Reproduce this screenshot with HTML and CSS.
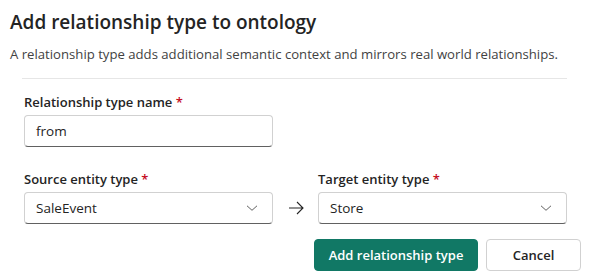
FILE: index.html
```html
<!DOCTYPE html>
<html lang="en">
<head>
    <meta charset="UTF-8">
    <meta name="viewport" content="width=device-width, initial-scale=1.0">
    <title>Add relationship type</title>
    <link rel="stylesheet" href="styles.css">
</head>
<body>
    <div class="dialog">
        <h1 class="title">Add relationship type to ontology</h1>
        <p class="subtitle">A relationship type adds additional semantic context and mirrors real world relationships.</p>
        <div class="divider"></div>

        <div class="form">
            <!-- Name -->
            <div class="field">
                <label class="label">Relationship type name <span class="req">*</span></label>
                <div class="input">from</div>
            </div>

            <!-- Source -> Target -->
            <div class="pair">
                <div class="field">
                    <label class="label">Source entity type <span class="req">*</span></label>
                    <div class="input select">
                        <span>SaleEvent</span>
                        <svg class="chev" width="12" height="12" viewBox="0 0 12 12"><path d="M1 3.8 L6 8.3 L11 3.8" fill="none" stroke="#616161" stroke-width="1"/></svg>
                    </div>
                </div>
                <div class="arrow">
                    <svg width="16" height="14" viewBox="0 0 16 14"><path d="M1 7 H15 M9 1 L15 7 L9 13" fill="none" stroke="#242424" stroke-width="1.1"/></svg>
                </div>
                <div class="field">
                    <label class="label">Target entity type <span class="req">*</span></label>
                    <div class="input select">
                        <span>Store</span>
                        <svg class="chev" width="12" height="12" viewBox="0 0 12 12"><path d="M1 3.8 L6 8.3 L11 3.8" fill="none" stroke="#616161" stroke-width="1"/></svg>
                    </div>
                </div>
            </div>
        </div>

        <div class="actions">
            <button class="btn primary">Add relationship type</button>
            <button class="btn">Cancel</button>
        </div>
    </div>
</body>
</html>
```

FILE: styles.css
```css
body {
    margin: 0;
    background: #fff;
    font-family: "Segoe UI", "Open Sans", sans-serif;
    color: #242424;
}
.dialog {
    width: 589px;
}
.title {
    margin: 8px 0 0 10px;
    font-size: 19px;
    line-height: 28px;
    font-weight: 600;
}
.subtitle {
    margin: 8px 0 0 10px;
    font-size: 13.15px;
    line-height: 20px;
    color: #424242;
    white-space: nowrap;
}
.divider {
    margin: 14px 22px 0 22px;
    border-top: 1px solid #e6e6e6;
}
.form {
    padding: 13px 0 0 24px;
}
.field {
    display: flex;
    flex-direction: column;
    width: 249px;
}
.label {
    font-size: 13px;
    line-height: 20px;
    font-weight: 600;
    margin-bottom: 3px;
}
.req {
    color: #c50f1f;
}
.input {
    box-sizing: border-box;
    height: 32px;
    border: 1px solid #d1d1d1;
    border-bottom-color: #616161;
    border-radius: 4px;
    padding: 0 11px;
    font-size: 13.5px;
    display: flex;
    align-items: center;
}
.select {
    justify-content: space-between;
    padding-right: 14px;
}
.pair {
    display: flex;
    align-items: flex-end;
    margin-top: 22px;
}
.arrow {
    width: 45px;
    height: 32px;
    display: flex;
    align-items: center;
    justify-content: center;
}
.actions {
    display: flex;
    justify-content: flex-end;
    gap: 8px;
    margin: 15px 8px 0 0;
}
.btn {
    box-sizing: border-box;
    height: 32px;
    min-width: 95px;
    padding: 0 12px;
    border: 1px solid #d1d1d1;
    border-radius: 4px;
    background: #fff;
    color: #242424;
    font-family: inherit;
    font-size: 13px;
    font-weight: 600;
    white-space: nowrap;
}
.primary {
    width: 164px;
    background: #117865;
    border-color: #117865;
    color: #fff;
}
```
